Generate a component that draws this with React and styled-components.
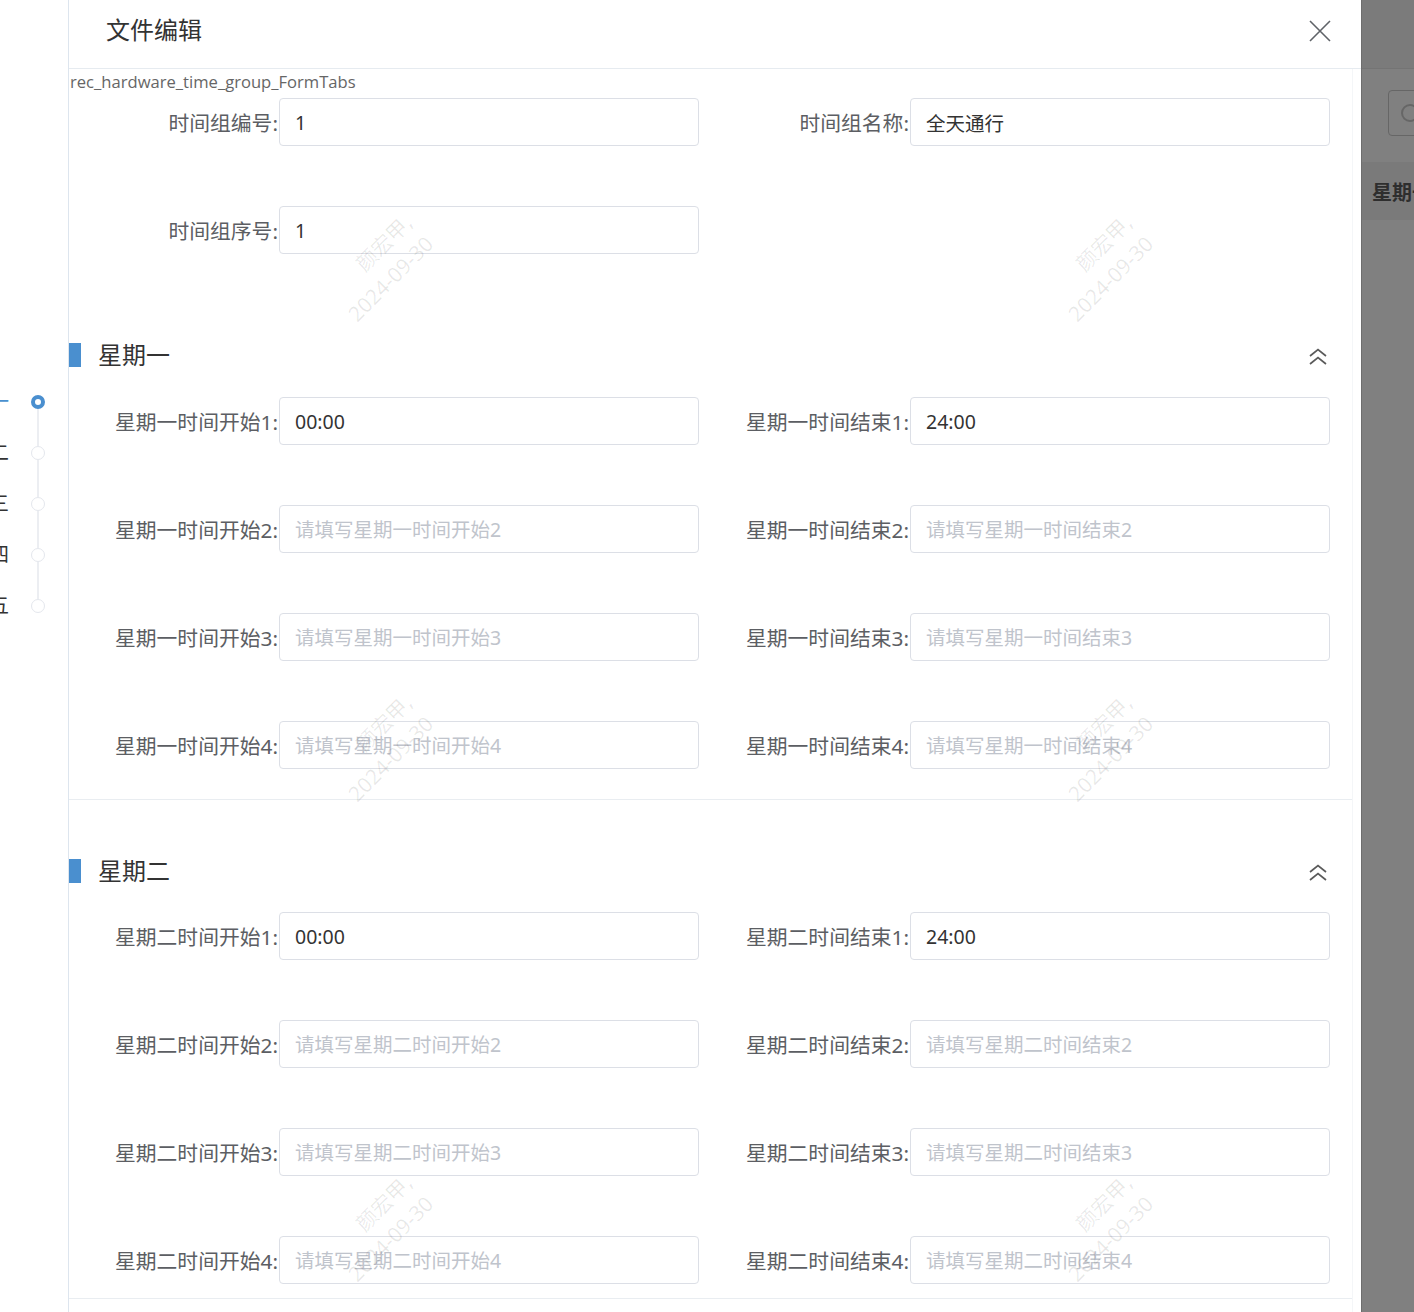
import React from 'react';
import styled, { createGlobalStyle } from 'styled-components';

const GlobalStyle = createGlobalStyle`
    html, body {
        margin: 0;
        padding: 0;
        background: #ffffff;
        font-family: "Noto Sans", "Noto Sans CJK SC", sans-serif;
    }
`;

const Page = styled.div`
    position: relative;
    display: flex;
    width: 1414px;
    height: 1312px;
    overflow: hidden;
    background: #ffffff;
`;

/* left anchor timeline (cut off by the page edge) */
const AnchorNav = styled.nav`
    width: 68px;
    flex-shrink: 0;
    overflow: hidden;
    display: flex;
    justify-content: flex-end;
    align-items: flex-start;
    padding: 376px 23px 0 0;
    box-sizing: border-box;
`;

const AnchorList = styled.ul`
    flex-shrink: 0;
    display: flex;
    flex-direction: column;
    margin: 0;
    padding: 0;
    list-style: none;
`;

const AnchorItem = styled.li`
    height: 51px;
    display: flex;
    align-items: center;
    justify-content: flex-end;
    gap: 22px;
`;

const AnchorLabel = styled.span`
    font-size: 20px;
    line-height: 1;
    white-space: nowrap;
    color: ${(p) => (p.$active ? '#4a8fcf' : '#333333')};
`;

const DotCol = styled.div`
    width: 14px;
    height: 100%;
    display: flex;
    flex-direction: column;
    align-items: center;
`;

const Seg = styled.div`
    flex: 1;
    width: 2px;
    background: ${(p) => (p.$hidden ? 'transparent' : '#eceef2')};
`;

const Dot = styled.div`
    width: 14px;
    height: 14px;
    box-sizing: border-box;
    border-radius: 50%;
    background: #ffffff;
    border: ${(p) => (p.$active ? '4px solid #4a8fcf' : '1.5px solid #e4e7ed')};
`;

/* modal */
const Modal = styled.div`
    width: 1293px;
    flex-shrink: 0;
    display: flex;
    flex-direction: column;
    border-left: 1px solid #dde5ee;
    box-sizing: border-box;
    background: #ffffff;
`;

const ModalHeader = styled.header`
    height: 69px;
    flex-shrink: 0;
    box-sizing: border-box;
    display: flex;
    align-items: center;
    justify-content: space-between;
    padding: 0 30px 6px 37px;
    border-bottom: 1px solid #e6ebf0;
`;

const ModalTitle = styled.h2`
    margin: 0 0 2px;
    font-size: 24px;
    line-height: 30px;
    font-weight: 400;
    color: #333333;
`;

const CloseBtn = styled.button`
    width: 22px;
    height: 22px;
    padding: 0;
    border: none;
    background: none;
    display: flex;
    cursor: pointer;
`;

const ModalBody = styled.div`
    flex: 1;
    min-height: 0;
    display: flex;
`;

const Content = styled.div`
    flex: 1;
    display: flex;
    flex-direction: column;
`;

const Gutter = styled.div`
    width: 8px;
    flex-shrink: 0;
    border-left: 1px solid #f4f6f8;
`;

const TabTag = styled.div`
    margin-top: 1px;
    padding-left: 1px;
    font-family: "Open Sans", "Noto Sans", sans-serif;
    font-size: 16.6px;
    line-height: 24px;
    color: #666666;
`;

const FieldGrid = styled.div`
    display: grid;
    grid-template-columns: 630px 630px;
    grid-auto-rows: 48px;
    column-gap: 1px;
    row-gap: 60px;
    margin-top: ${(p) => p.$mt || 0}px;
    margin-bottom: ${(p) => p.$mb || 0}px;
`;

const Field = styled.div`
    display: flex;
`;

const Label = styled.label`
    width: 210px;
    flex-shrink: 0;
    box-sizing: border-box;
    padding-right: 1px;
    text-align: right;
    white-space: nowrap;
    font-size: 20.8px;
    line-height: 50px;
    color: #5c5e63;
`;

const Input = styled.input`
    width: 420px;
    height: 48px;
    box-sizing: border-box;
    padding: 0 15px;
    border: 1px solid #dcdfe6;
    border-radius: 4px;
    outline: none;
    font-family: "Noto Sans", "Noto Sans CJK SC", sans-serif;
    font-size: 19.5px;
    color: #333333;
    background: #ffffff;

    &::placeholder {
        color: #c0c4cc;
    }
`;

const Section = styled.section`
    padding: ${(p) => p.$pt}px 0 ${(p) => p.$pb}px;
    border-bottom: 1px solid #e9edf1;
`;

const SectionHead = styled.div`
    width: 1261px;
    height: 24px;
    box-sizing: border-box;
    padding-right: 2px;
    margin-bottom: ${(p) => p.$gap}px;
    display: flex;
    align-items: center;
    justify-content: space-between;
`;

const SectionTitle = styled.h3`
    margin: 0;
    display: flex;
    align-items: center;
    gap: 17px;
    font-size: 24px;
    line-height: 24px;
    font-weight: 400;
    color: #333333;
`;

const SectionBar = styled.span`
    width: 12px;
    height: 24px;
    background: #4a8fcf;
`;

const Collapse = styled.button`
    width: 20px;
    height: 20px;
    margin-top: 4px;
    padding: 0;
    border: none;
    background: none;
    display: flex;
    cursor: pointer;
`;

/* dimmed page behind the modal */
const Mask = styled.div`
    width: 53px;
    flex-shrink: 0;
    overflow: hidden;
    background: #808080;
    border-left: 1px solid #6e6e6e;
    box-sizing: border-box;
    display: flex;
    flex-direction: column;
`;

const MaskHead = styled.div`
    height: 68px;
    flex-shrink: 0;
    background: #7b7b7b;
    border-bottom: 1px solid #747474;
`;

const SearchBox = styled.div`
    margin: 21px 0 0 26px;
    width: 120px;
    height: 46px;
    flex-shrink: 0;
    box-sizing: border-box;
    border: 1px solid #666666;
    border-radius: 4px;
    display: flex;
    align-items: center;
    padding-left: 12px;
`;

const SearchIcon = styled.span`
    width: 18px;
    height: 18px;
    box-sizing: border-box;
    border: 2px solid #666666;
    border-radius: 50%;
`;

const MaskTh = styled.div`
    margin-top: 26px;
    height: 58px;
    flex-shrink: 0;
    background: #7a7a7a;
    display: flex;
    align-items: center;
    padding-left: 10px;
    white-space: nowrap;
    font-size: 20px;
    font-weight: 700;
    color: #2e2e2e;
`;

/* watermark layer */
const Watermarks = styled.div`
    position: absolute;
    inset: 0;
    z-index: 5;
    pointer-events: none;
    display: grid;
    grid-template-columns: repeat(2, 720px);
    grid-auto-rows: 480px;
    padding: 28px 0 0 20px;
    box-sizing: border-box;
`;

const WmCell = styled.div`
    display: flex;
    align-items: center;
    justify-content: center;
`;

const WmText = styled.div`
    transform: rotate(-45deg);
    text-align: right;
    font-size: 21px;
    line-height: 30px;
    color: rgba(0, 0, 0, 0.09);
    white-space: nowrap;
`;

const days = ['星期一', '星期二', '星期三', '星期四', '星期五'];

function CloseIcon() {
    return (
        <svg width="22" height="22" viewBox="0 0 22 22">
            <path d="M1 1 L21 21 M21 1 L1 21" stroke="#5f6368" strokeWidth="1.6" fill="none" />
        </svg>
    );
}

function UpIcon() {
    return (
        <svg width="20" height="20" viewBox="0 0 20 20">
            <path
                d="M2 9 L10 2.5 L18 9 M2 17 L10 10.5 L18 17"
                stroke="#5a5a5a"
                strokeWidth="1.7"
                fill="none"
            />
        </svg>
    );
}

function DaySection({ day, pt, gap, pb }) {
    const rows = [1, 2, 3, 4];
    return (
        <Section $pt={pt} $pb={pb}>
            <SectionHead $gap={gap}>
                <SectionTitle>
                    <SectionBar />
                    {day}
                </SectionTitle>
                <Collapse>
                    <UpIcon />
                </Collapse>
            </SectionHead>
            <FieldGrid>
                {rows.map((n) => (
                    <React.Fragment key={n}>
                        <Field>
                            <Label>{`${day}时间开始${n}:`}</Label>
                            <Input
                                defaultValue={n === 1 ? '00:00' : ''}
                                placeholder={`请填写${day}时间开始${n}`}
                            />
                        </Field>
                        <Field>
                            <Label>{`${day}时间结束${n}:`}</Label>
                            <Input
                                defaultValue={n === 1 ? '24:00' : ''}
                                placeholder={`请填写${day}时间结束${n}`}
                            />
                        </Field>
                    </React.Fragment>
                ))}
            </FieldGrid>
        </Section>
    );
}

function App() {
    return (
        <>
            <GlobalStyle />
            <Page>
                <AnchorNav>
                    <AnchorList>
                        {days.map((d, i) => (
                            <AnchorItem key={d}>
                                <AnchorLabel $active={i === 0}>{d}</AnchorLabel>
                                <DotCol>
                                    <Seg $hidden={i === 0} />
                                    <Dot $active={i === 0} />
                                    <Seg $hidden={i === days.length - 1} />
                                </DotCol>
                            </AnchorItem>
                        ))}
                    </AnchorList>
                </AnchorNav>

                <Modal>
                    <ModalHeader>
                        <ModalTitle>文件编辑</ModalTitle>
                        <CloseBtn>
                            <CloseIcon />
                        </CloseBtn>
                    </ModalHeader>
                    <ModalBody>
                        <Content>
                            <TabTag>rec_hardware_time_group_FormTabs</TabTag>
                            <FieldGrid $mt={4} $mb={29}>
                                <Field>
                                    <Label>时间组编号:</Label>
                                    <Input defaultValue="1" />
                                </Field>
                                <Field>
                                    <Label>时间组名称:</Label>
                                    <Input defaultValue="全天通行" />
                                </Field>
                                <Field>
                                    <Label>时间组序号:</Label>
                                    <Input defaultValue="1" />
                                </Field>
                            </FieldGrid>
                            <DaySection day="星期一" pt={60} gap={30} pb={30} />
                            <DaySection day="星期二" pt={59} gap={29} pb={14} />
                        </Content>
                        <Gutter />
                    </ModalBody>
                </Modal>

                <Mask>
                    <MaskHead />
                    <SearchBox>
                        <SearchIcon />
                    </SearchBox>
                    <MaskTh>星期一</MaskTh>
                </Mask>

                <Watermarks>
                    {Array.from({ length: 6 }).map((_, i) => (
                        <WmCell key={i}>
                            <WmText>
                                颜宏甲,
                                <br />
                                2024-09-30
                            </WmText>
                        </WmCell>
                    ))}
                </Watermarks>
            </Page>
        </>
    );
}

export default App;
